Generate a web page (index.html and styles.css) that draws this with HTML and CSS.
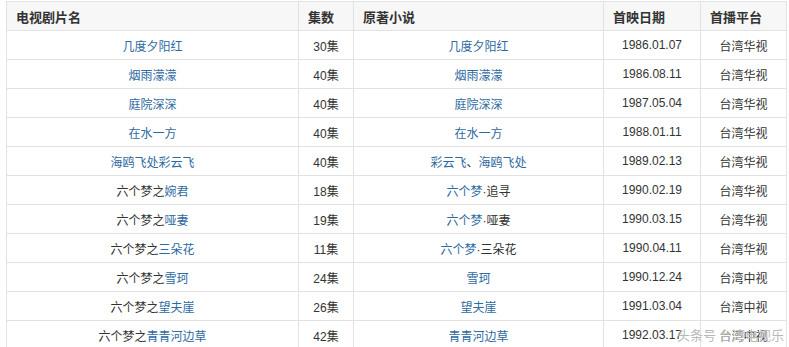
FILE: index.html
```html
<!DOCTYPE html>
<html lang="zh">
<head>
<meta charset="utf-8">
<title>电视剧</title>
<link rel="stylesheet" href="styles.css">
</head>
<body>
<div class="wrap">
<table class="tv">
  <colgroup>
    <col class="c1"><col class="c2"><col class="c3"><col class="c4"><col class="c5">
  </colgroup>
  <thead>
    <tr><th>电视剧片名</th><th>集数</th><th>原著小说</th><th>首映日期</th><th>首播平台</th></tr>
  </thead>
  <tbody>
    <tr><td><a>几度夕阳红</a></td><td>30集</td><td><a>几度夕阳红</a></td><td>1986.01.07</td><td>台湾华视</td></tr>
    <tr><td><a>烟雨濛濛</a></td><td>40集</td><td><a>烟雨濛濛</a></td><td>1986.08.11</td><td>台湾华视</td></tr>
    <tr><td><a>庭院深深</a></td><td>40集</td><td><a>庭院深深</a></td><td>1987.05.04</td><td>台湾华视</td></tr>
    <tr><td><a>在水一方</a></td><td>40集</td><td><a>在水一方</a></td><td>1988.01.11</td><td>台湾华视</td></tr>
    <tr><td><a>海鸥飞处彩云飞</a></td><td>40集</td><td><a>彩云飞</a>、<a>海鸥飞处</a></td><td>1989.02.13</td><td>台湾华视</td></tr>
    <tr><td>六个梦之<a>婉君</a></td><td>18集</td><td><a>六个梦</a>·追寻</td><td>1990.02.19</td><td>台湾华视</td></tr>
    <tr><td>六个梦之<a>哑妻</a></td><td>19集</td><td><a>六个梦</a>·哑妻</td><td>1990.03.15</td><td>台湾华视</td></tr>
    <tr><td>六个梦之<a>三朵花</a></td><td>11集</td><td><a>六个梦</a>·三朵花</td><td>1990.04.11</td><td>台湾华视</td></tr>
    <tr><td>六个梦之<a>雪珂</a></td><td>24集</td><td><a>雪珂</a></td><td>1990.12.24</td><td>台湾中视</td></tr>
    <tr><td>六个梦之<a>望夫崖</a></td><td>26集</td><td><a>望夫崖</a></td><td>1991.03.04</td><td>台湾中视</td></tr>
    <tr><td>六个梦之<a>青青河边草</a></td><td>42集</td><td><a>青青河边草</a></td><td>1992.03.17</td><td>台湾中视</td></tr>
  </tbody>
</table>
<div class="watermark">头条号 台湾电视乐</div>
</div>
</body>
</html>
```
FILE: styles.css
```css
html, body {
  margin: 0;
  padding: 0;
  background: #ffffff;
  overflow: hidden;
}
.wrap {
  position: relative;
  padding: 1px 0 0 6px;
}
.tv {
  border-collapse: collapse;
  table-layout: fixed;
  width: 780px;
  font-family: "Liberation Sans", "Noto Sans CJK SC", sans-serif;
  font-size: 12px;
  color: #333333;
}
.c1 { width: 292px; }
.c2 { width: 55px; }
.c3 { width: 250px; }
.c4 { width: 97px; }
.c5 { width: 86px; }
.tv th, .tv td {
  border: 1px solid #e2e2e2;
  height: 28px;
  padding: 0;
  vertical-align: middle;
  white-space: nowrap;
}
.tv th {
  background: #f7f7f7;
  text-align: left;
  padding-left: 9px;
  font-family: "Noto Sans CJK SC", sans-serif;
  font-weight: bold;
  font-size: 13px;
  color: #333333;
}
.tv td {
  text-align: center;
}
.tv a {
  color: #2e6aa1;
  text-decoration: none;
}
.watermark {
  position: absolute;
  left: 677px;
  top: 325px;
  font-family: "Noto Sans CJK SC", sans-serif;
  font-size: 13px;
  color: rgba(170, 170, 170, 0.85);
  text-shadow: 0 0 1px #ffffff;
  white-space: nowrap;
}
```
